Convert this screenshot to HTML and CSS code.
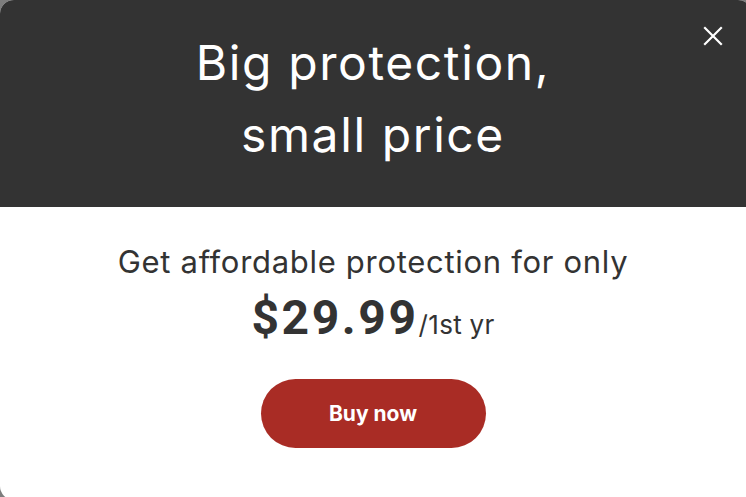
FILE: index.html
```html
<!DOCTYPE html>
<html lang="en">
<head>
<meta charset="utf-8">
<title>Big protection, small price</title>
<link rel="stylesheet" href="styles.css">
</head>
<body>
<div class="modal">
  <header class="modal-head">
    <h1 class="title">Big protection,<br>small price</h1>
    <button class="close" aria-label="Close">
      <svg viewBox="0 0 20 20" width="20" height="20"><path d="M2 2 L18 18 M18 2 L2 18" stroke="#fff" stroke-width="2.2" stroke-linecap="square" fill="none"/></svg>
    </button>
  </header>
  <section class="modal-body">
    <p class="lead">Get affordable protection for only</p>
    <p class="price"><span class="amount">$29.99</span><span class="term">/1st yr</span></p>
    <button class="buy">Buy now</button>
  </section>
</div>
</body>
</html>
```
FILE: styles.css
```css
html, body {
  margin: 0;
  padding: 0;
  height: 100%;
  overflow: hidden;
  background: #7d7d7d;
}
.modal {
  width: 752px;
  height: 500px;
  border-radius: 14px;
  overflow: hidden;
  background: #ffffff;
  display: flex;
  flex-direction: column;
  font-family: Inter, "Open Sans", sans-serif;
}
.modal-head {
  position: relative;
  background: #333333;
  height: 207px;
  box-sizing: border-box;
  padding-top: 27px;
  text-align: center;
}
.title {
  margin: 0;
  margin-right: 6px;
  color: #ffffff;
  font-weight: 400;
  font-size: 48px;
  line-height: 72px;
  letter-spacing: 1.6px;
}
.close {
  position: absolute;
  top: 26px;
  right: 29px;
  width: 20px;
  height: 20px;
  padding: 0;
  border: 0;
  background: transparent;
  display: flex;
}
.modal-body {
  display: flex;
  flex-direction: column;
  align-items: center;
  padding-top: 35px;
  padding-right: 6px;
}
.lead {
  margin: 0;
  color: #333333;
  font-size: 31px;
  line-height: 40px;
  letter-spacing: 0.7px;
}
.price {
  margin: 8px 0 0;
  display: flex;
  align-items: baseline;
  color: #333333;
  line-height: 56px;
}
.amount {
  font-family: Roboto, Inter, sans-serif;
  font-weight: 700;
  font-size: 48px;
  letter-spacing: 2.6px;
}
.term {
  font-size: 26px;
  letter-spacing: 0.3px;
}
.buy {
  margin-top: 26px;
  width: 225px;
  height: 69px;
  border: 0;
  border-radius: 35px;
  background: #a92c25;
  color: #ffffff;
  font-family: Inter, sans-serif;
  font-weight: 700;
  font-size: 21px;
}
```
